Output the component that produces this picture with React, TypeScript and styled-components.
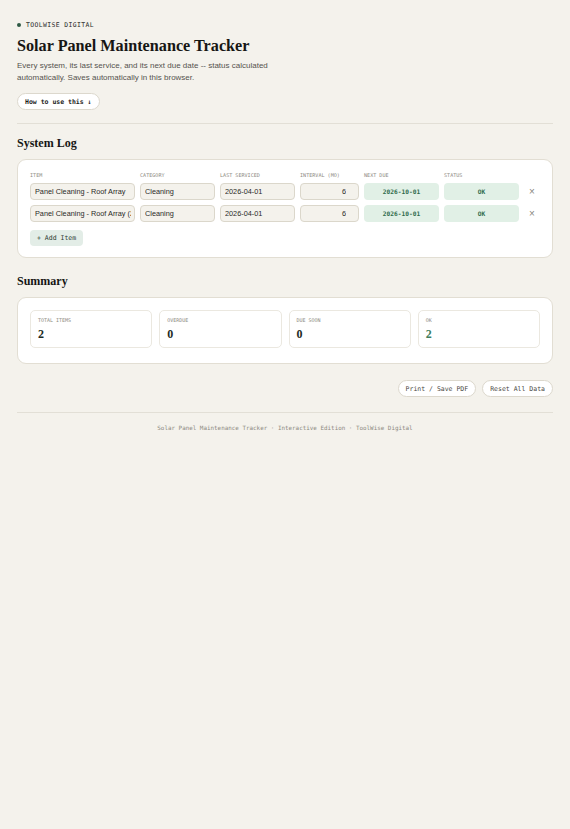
import styled, { createGlobalStyle } from "styled-components";

const GlobalStyle = createGlobalStyle`
  body {
    margin: 0;
    background: #f4f2ec;
    font-family: "Liberation Sans", Arial, sans-serif;
    color: #1d1d1b;
  }
`;

const mono = `"DejaVu Sans Mono", "Liberation Mono", monospace`;
const serif = `"Liberation Serif", "Times New Roman", serif`;

type Row = {
  item: string;
  category: string;
  last: string;
  interval: number;
  next: string;
  status: string;
};

const rows: Row[] = [
  { item: "Panel Cleaning - Roof Array", category: "Cleaning", last: "2026-04-01", interval: 6, next: "2026-10-01", status: "OK" },
  { item: "Panel Cleaning - Roof Array (2)", category: "Cleaning", last: "2026-04-01", interval: 6, next: "2026-10-01", status: "OK" },
];

const stats = [
  { label: "Total Items", value: "2", ok: false },
  { label: "Overdue", value: "0", ok: false },
  { label: "Due Soon", value: "0", ok: false },
  { label: "OK", value: "2", ok: true },
];

const App = () => {
  return (
    <>
      <GlobalStyle />
      <Page>
        <Brand>
          <Dot />
          ToolWise Digital
        </Brand>
        <Title>Solar Panel Maintenance Tracker</Title>
        <Lead>
          Every system, its last service, and its next due date -- status calculated
          automatically. Saves automatically in this browser.
        </Lead>
        <HowTo>How to use this ↓</HowTo>
        <Rule $top={13} />

        <SectionTitle>System Log</SectionTitle>
        <Card>
          <LogGrid>
            <HeadCell>Item</HeadCell>
            <HeadCell>Category</HeadCell>
            <HeadCell>Last Serviced</HeadCell>
            <HeadCell>Interval (mo)</HeadCell>
            <HeadCell>Next Due</HeadCell>
            <HeadCell>Status</HeadCell>
            <span />
            {rows.map((r, i) => (
              <RowCells key={i}>
                <Field defaultValue={r.item} />
                <Field defaultValue={r.category} />
                <Field defaultValue={r.last} />
                <Field defaultValue={r.interval} $right />
                <Pill>{r.next}</Pill>
                <Pill>{r.status}</Pill>
                <Remove>×</Remove>
              </RowCells>
            ))}
          </LogGrid>
          <AddButton>+ Add Item</AddButton>
        </Card>

        <SectionTitle $spaced>Summary</SectionTitle>
        <Card $bottom={15}>
          <StatGrid>
            {stats.map((s) => (
              <Stat key={s.label}>
                <StatLabel>{s.label}</StatLabel>
                <StatValue $ok={s.ok}>{s.value}</StatValue>
              </Stat>
            ))}
          </StatGrid>
        </Card>

        <Actions>
          <GhostButton>Print / Save PDF</GhostButton>
          <GhostButton>Reset All Data</GhostButton>
        </Actions>
        <Rule $top={15} />
        <Footer>Solar Panel Maintenance Tracker · Interactive Edition · ToolWise Digital</Footer>
      </Page>
    </>
  );
};
export default App;

const Page = styled.div`
  padding: 20px 17px 40px;
  display: flex;
  flex-direction: column;
  align-items: flex-start;
`;

const Brand = styled.div`
  display: flex;
  align-items: center;
  gap: 5px;
  font-family: ${mono};
  font-size: 6.4px;
  letter-spacing: 0.4px;
  text-transform: uppercase;
  color: #2a2a28;
  height: 10px;
`;

const Dot = styled.span`
  width: 4px;
  height: 4px;
  border-radius: 50%;
  background: #2d5a45;
`;

const Title = styled.h1`
  font-family: ${serif};
  font-weight: 700;
  font-size: 16.2px;
  line-height: 20px;
  margin: 6px 0 4px;
  color: #161614;
`;

const Lead = styled.p`
  margin: 0;
  max-width: 290px;
  font-size: 8px;
  line-height: 12px;
  color: #55534e;
`;

const HowTo = styled.button`
  margin-top: 9px;
  height: 17px;
  padding: 0 7px;
  border: 1px solid #dcd8cd;
  border-radius: 9px;
  background: #fff;
  font-family: ${mono};
  font-weight: 700;
  font-size: 6.5px;
  color: #1d1d1b;
`;

const Rule = styled.hr<{ $top?: number }>`
  align-self: stretch;
  border: none;
  border-top: 1px solid #e2dfd6;
  margin: ${({ $top }) => $top ?? 12}px 0 0;
`;

const SectionTitle = styled.h2<{ $spaced?: boolean }>`
  font-family: ${serif};
  font-weight: 700;
  font-size: 12px;
  line-height: 14px;
  margin: ${({ $spaced }) => ($spaced ? "16px" : "12px")} 0 9px;
  color: #161614;
`;

const Card = styled.div<{ $bottom?: number }>`
  align-self: stretch;
  background: #fff;
  border: 1.5px solid #e2ded3;
  border-radius: 9px;
  padding: 12px 12px ${({ $bottom }) => $bottom ?? 11}px;
  display: flex;
  flex-direction: column;
  align-items: flex-start;
`;

const LogGrid = styled.div`
  align-self: stretch;
  display: grid;
  grid-template-columns: 105px 75px 75px 59px 75px 75px 16px;
  column-gap: 5px;
  row-gap: 5px;
  align-items: center;
`;

const RowCells = styled.div`
  display: contents;
`;

const HeadCell = styled.div`
  font-family: ${mono};
  font-size: 5.1px;
  text-transform: uppercase;
  color: #8d8a82;
  height: 8px;
  margin-bottom: -2px;
`;

const Field = styled.input<{ $right?: boolean }>`
  box-sizing: border-box;
  width: 100%;
  height: 17px;
  padding: 0 4px;
  border: 1px solid #dbd7cb;
  border-radius: 4px;
  background: #f4f2ec;
  font-family: "Liberation Sans", Arial, sans-serif;
  font-size: 7.3px;
  color: #2a2a28;
  text-align: ${({ $right }) => ($right ? "right" : "left")};
  padding-right: ${({ $right }) => ($right ? "12px" : "3px")};
  outline: none;
`;

const Pill = styled.div`
  height: 17px;
  border-radius: 4px;
  background: #e1f0e6;
  color: #2f6b4d;
  font-family: ${mono};
  font-weight: 700;
  font-size: 6.2px;
  display: flex;
  align-items: center;
  justify-content: center;
`;

const Remove = styled.div`
  font-size: 10px;
  color: #8a8780;
  text-align: center;
`;

const AddButton = styled.button`
  margin-top: 8px;
  height: 16px;
  padding: 0 7px;
  border: none;
  border-radius: 4px;
  background: #e3ede7;
  color: #2c3a33;
  font-family: ${mono};
  font-size: 6.5px;
`;

const StatGrid = styled.div`
  align-self: stretch;
  display: grid;
  grid-template-columns: repeat(4, 1fr);
  gap: 7px;
`;

const Stat = styled.div`
  height: 38px;
  box-sizing: border-box;
  border: 1px solid #ebe8e0;
  border-radius: 5px;
  padding: 6px 7px 0;
`;

const StatLabel = styled.div`
  font-family: ${mono};
  font-size: 5px;
  text-transform: uppercase;
  color: #8d8a82;
`;

const StatValue = styled.div<{ $ok: boolean }>`
  margin-top: 4px;
  font-family: ${serif};
  font-weight: 700;
  font-size: 12px;
  color: ${({ $ok }) => ($ok ? "#3f7d5c" : "#1d2a24")};
`;

const Actions = styled.div`
  align-self: stretch;
  display: flex;
  justify-content: flex-end;
  gap: 6px;
  margin-top: 16px;
`;

const GhostButton = styled.button`
  height: 17px;
  padding: 0 7px;
  border: 1px solid #dcd8cd;
  border-radius: 9px;
  background: #fff;
  font-family: ${mono};
  font-size: 6.5px;
  color: #4a4843;
`;

const Footer = styled.div`
  align-self: stretch;
  text-align: center;
  margin-top: 12px;
  font-family: ${mono};
  font-size: 5.9px;
  color: #8d8a82;
`;
